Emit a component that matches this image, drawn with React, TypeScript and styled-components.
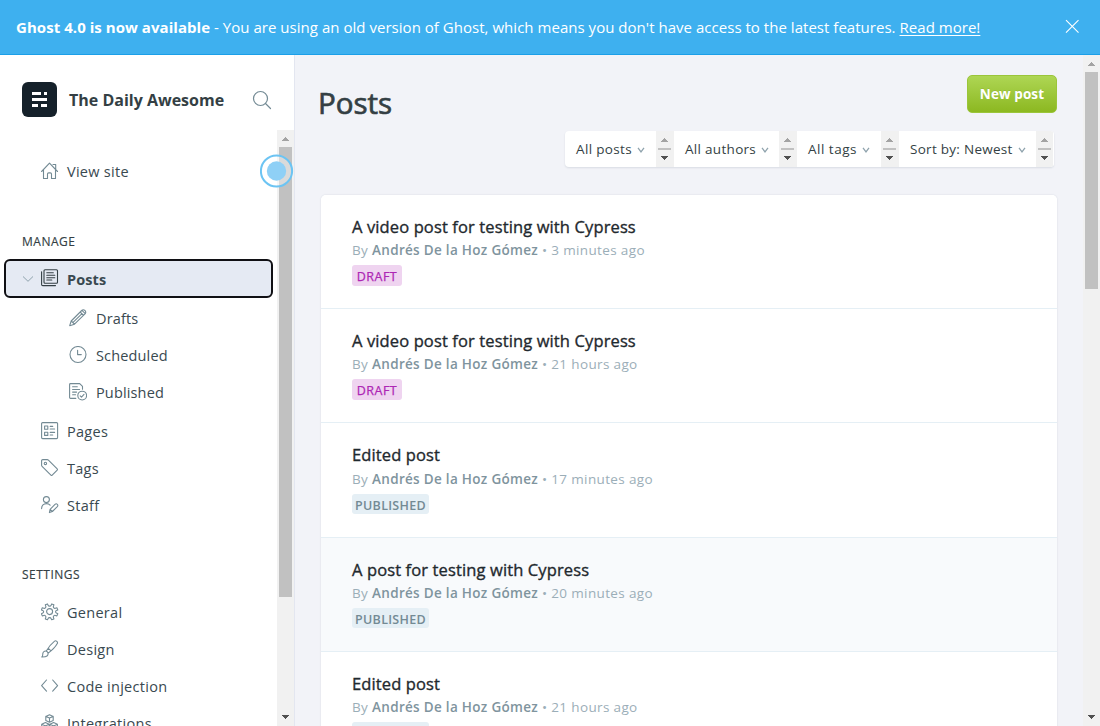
import React from "react";
import styled, { createGlobalStyle, css } from "styled-components";

const GlobalStyle = createGlobalStyle`
  * { box-sizing: border-box; }
  html, body { margin: 0; height: 100%; overflow: hidden; }
  body {
    font-family: "Open Sans", "Noto Sans", sans-serif;
    font-size: 14px;
    color: #343f44;
    background: #f2f3f8;
  }
  svg { display: block; }
`;

const Page = styled.div`
  display: flex;
  flex-direction: column;
  height: 726px;
  overflow: hidden;
`;

const Banner = styled.header`
  display: flex;
  align-items: center;
  justify-content: space-between;
  flex: none;
  height: 55px;
  padding: 0 20px 1px 16px;
  background: #3eb0ef;
  border-bottom: 1px solid #1b9fe8;
  color: #fff;
`;

const BannerText = styled.div`
  font-size: 15px;
  line-height: 20px;
  letter-spacing: 0.03px;
  white-space: nowrap;
`;

const BannerStrong = styled.strong`
  font-weight: 700;
  letter-spacing: 0.05px;
`;

const BannerLink = styled.a`
  color: #fff;
  text-decoration: underline;
  text-underline-offset: 2px;
`;

const Body = styled.div`
  display: flex;
  flex: 1;
  min-height: 0;
`;

const Sidebar = styled.aside`
  position: relative;
  display: flex;
  flex-direction: column;
  flex: none;
  width: 295px;
  background: #fff;
  border-right: 1px solid #e3e6f0;
`;

const SiteHeader = styled.div`
  display: flex;
  align-items: center;
  flex: none;
  height: 75px;
  padding: 14px 22px 0;
`;

const SiteLogo = styled.div`
  width: 35px;
  height: 35px;
  flex: none;
  margin-right: 12px;
`;

const SiteName = styled.div`
  flex: 1;
  font-size: 16px;
  font-weight: 700;
  letter-spacing: 0;
  white-space: nowrap;
`;

const NavScroll = styled.div`
  display: flex;
  flex: 1;
  min-height: 0;
`;

const Nav = styled.nav`
  flex: 1;
  overflow: hidden;
  padding-top: 23px;
`;

const NavHeading = styled.h4<{ $top: number }>`
  margin: ${(p) => p.$top}px 0 0;
  padding: 0 22px;
  height: 18px;
  font-size: 12px;
  line-height: 18px;
  font-weight: 400;
  letter-spacing: 0.5px;
  text-transform: uppercase;
  -webkit-text-stroke: 0.15px currentColor;
`;

const NavItem = styled.a<{ $sub?: boolean; $active?: boolean }>`
  display: flex;
  align-items: center;
  height: 37px;
  padding-left: ${(p) => (p.$sub ? 69 : 41)}px;
  font-size: 14.5px;
  letter-spacing: ${(p) => (p.$sub ? 0.15 : 0.28)}px;
  white-space: nowrap;
  color: #394950;
  ${(p) =>
    p.$active &&
    css`
      height: 39px;
      margin: 8px 4px 2px;
      padding-left: 16px;
      border: 2px solid #101014;
      border-radius: 6px;
      background: #e5eaf3;
      font-weight: 700;
      letter-spacing: 0.1px;
    `}
`;

const NavIcon = styled.span<{ $sub?: boolean; $dark?: boolean }>`
  width: 18px;
  height: 18px;
  flex: none;
  margin-top: -1px;
  margin-right: ${(p) => (p.$sub ? 9 : 8)}px;
  color: ${(p) => (p.$dark ? "#343f44" : "#738a94")};
`;

const ActiveLabel = styled.span`
  padding-top: 2px;
`;

const NavChevron = styled.span`
  width: 12px;
  margin-right: 7px;
  color: #8fa3ad;
`;

const Gap = styled.div<{ $size: number }>`
  height: ${(p) => p.$size}px;
`;

const ScrollTrack = styled.div`
  display: flex;
  flex-direction: column;
  align-items: center;
  flex: none;
  width: 17px;
  background: #f1f1f1;
`;

const ScrollThumb = styled.div<{ $h: number }>`
  width: 13px;
  height: ${(p) => p.$h}px;
  background: #c1c1c1;
`;

const ScrollArrow = styled.div<{ $down?: boolean }>`
  display: flex;
  align-items: center;
  justify-content: center;
  flex: none;
  width: 17px;
  height: 17px;
  margin-top: ${(p) => (p.$down ? "auto" : 0)};
  padding: ${(p) => (p.$down ? "0 0 1px" : "1px 0 0")};
  color: ${(p) => (p.$down ? "#505050" : "#a3a3a3")};
`;

const Beacon = styled.div`
  position: absolute;
  left: 260px;
  top: 99px;
  width: 34px;
  height: 34px;
`;

const Main = styled.main`
  flex: 1;
  min-width: 0;
  padding: 20px 26px 0 26px;
`;

const HeaderRow = styled.div`
  display: flex;
  justify-content: space-between;
  align-items: flex-start;
  height: 56px;
`;

const Title = styled.h1`
  margin: 6px 0 0 -3px;
  font-size: 29.5px;
  line-height: 44px;
  font-weight: 400;
  letter-spacing: 0;
  -webkit-text-stroke: 0.7px currentColor;
`;

const NewPost = styled.button`
  width: 90px;
  height: 38px;
  padding: 0;
  border: 1px solid #9bc53a;
  border-radius: 5px;
  background: linear-gradient(#aed654, #8cb821);
  color: #fff;
  font: 700 13.5px "Open Sans", "Noto Sans", sans-serif;
  letter-spacing: 0.1px;
  text-shadow: 0 -1px 0 rgba(0, 0, 0, 0.08);
`;

const Filters = styled.div`
  display: flex;
  width: 489px;
  height: 36px;
  margin-left: 244px;
  background: #fff;
  border-radius: 4px;
  overflow: hidden;
  box-shadow: 0 1px 2px rgba(30, 50, 80, 0.12);
`;

const Filter = styled.div<{ $w: number; $ls: number }>`
  display: flex;
  align-items: center;
  flex: none;
  width: ${(p) => p.$w}px;
  padding-left: 11px;
  font-size: 13.5px;
  letter-spacing: ${(p) => p.$ls}px;
  white-space: nowrap;
  svg { margin: 2px 0 0 5px; }
`;

const Spinner = styled.div`
  display: flex;
  flex-direction: column;
  align-items: center;
  flex: none;
  width: 18px;
  background: #f1f1f1;
  border-right: 1px solid #f1f1f1;
  &:last-child { border-right-color: #fff; }
`;

const SpinnerBar = styled.div`
  width: 13px;
  height: 2px;
  background: #c1c1c1;
`;

const PostList = styled.section`
  width: 736px;
  height: 600px;
  margin-top: 28px;
  background: #fff;
  border-radius: 5px;
  overflow: hidden;
  box-shadow: 0 0 2px rgba(30, 50, 80, 0.14);
`;

const PostRow = styled.article<{ $tall?: boolean; $hover?: boolean }>`
  height: ${(p) => (p.$tall ? 115 : 114)}px;
  padding: 20px 31px 0;
  border-bottom: 1px solid #e5eff5;
  background: ${(p) => (p.$hover ? "#f8fafc" : "#fff")};
`;

const PostTitle = styled.h3<{ $tall?: boolean }>`
  margin: 0 0 ${(p) => (p.$tall ? 1 : 0)}px;
  font-size: 16.5px;
  line-height: 24px;
  font-weight: 400;
  letter-spacing: 0.12px;
  color: #1f292e;
  -webkit-text-stroke: 0.35px currentColor;
`;

const PostMeta = styled.div`
  font-size: 13.5px;
  line-height: 22px;
  letter-spacing: 0.36px;
  color: #9baeb8;
`;

const Author = styled.span`
  font-weight: 600;
  letter-spacing: 0.3px;
  color: #7f949e;
`;

const Status = styled.span<{ $draft?: boolean }>`
  display: block;
  width: ${(p) => (p.$draft ? 50 : 77)}px;
  height: ${(p) => (p.$draft ? 21 : 20)}px;
  margin-top: 4px;
  border-radius: 3px;
  text-align: center;
  font-size: 12.5px;
  line-height: 23px;
  letter-spacing: ${(p) => (p.$draft ? 0.5 : 0.3)}px;
  font-weight: ${(p) => (p.$draft ? 400 : 600)};
  -webkit-text-stroke: ${(p) => (p.$draft ? 0.25 : 0)}px currentColor;
  color: ${(p) => (p.$draft ? "#ad26b4" : "#738a94")};
  background: ${(p) => (p.$draft ? "#efd4f0" : "#e5eff5")};
`;

const Icon = ({ children, w = 1.1 }: { children: React.ReactNode; w?: number }) => (
  <svg width="18" height="18" viewBox="0 0 18 18" fill="none" stroke="currentColor" strokeWidth={w} strokeLinecap="round" strokeLinejoin="round">
    {children}
  </svg>
);

const icons = {
  home: (
    <Icon>
      <path d="M.6 9.500 8.500 1.200l8 8.300M12 2.500h2.700v4.500M2.500 8.200v8.300h4v-4.400c0-.7.5-1.200 1.200-1.200h1.600c.7 0 1.200.5 1.200 1.200v4.400h4V8.200" />
    </Icon>
  ),
  posts: (
    <Icon>
      <rect x="3" y=".7" width="13.500" height="13.600" rx="1" />
      <path d="M.6 2.800v12.600c0 .7.5 1.200 1.200 1.200h12.700M5.800 3.700h6.500M5.800 6.300h8M5.800 8.700h8M5.800 11h5" />
    </Icon>
  ),
  pencil: (
    <Icon>
      <path d="M.7 16.700 2.200 12 12.700 1.500c1-1 2.200-.9 3.300 0 .9 1.100 1 2.300 0 3.300L5.500 15.200zM2.200 12l3.300 3.200M11.200 3l3.300 3.300M12.900 1.400l3.400 3.300M3.800 13.600 13 4.600" />
    </Icon>
  ),
  clock: (
    <Icon>
      <circle cx="9" cy="8.500" r="8" />
      <path d="M8.600 4.200v4.400h3.700" />
    </Icon>
  ),
  published: (
    <Icon>
      <path d="M6.800 15.400H1.500c-.5 0-.9-.4-.9-.9v-13c0-.5.4-.9.9-.9h9.200l2.800 2.800v2.800M3.600 3.800h4.700M3.600 6.500h7M3.600 9.100h4M3.600 11.800h3" />
      <circle cx="13.200" cy="12.600" r="4.400" />
      <path d="m11.200 12.800 1.300 1.300 2.500-2.700" />
    </Icon>
  ),
  pages: (
    <Icon>
      <rect x=".6" y=".6" width="16" height="16" rx="1" />
      <rect x="3.600" y="4" width="3.200" height="3.200" />
      <rect x="3.600" y="10.200" width="3.200" height="3.200" />
      <path d="M9.200 4.400h2.500M9.200 7h4.400M9.200 10.400h4.400M9.200 13h2.500" />
    </Icon>
  ),
  tag: (
    <Icon>
      <path d="M.6 1.700C.6 1 1.100.6 1.700.6h4.500c.5 0 .9.200 1.200.5l8.800 8.800c.4.4.4.9 0 1.300l-5 5c-.4.4-.9.4-1.300 0L1.100 7.400C.8 7.100.6 6.700.6 6.200z" />
      <circle cx="4.400" cy="4.400" r="1.200" />
    </Icon>
  ),
  staff: (
    <Icon>
      <circle cx="5.400" cy="3.600" r="3" />
      <path d="M.6 12.600c0-3.100 2-5 4.900-5 1.600 0 2.800.6 3.600 1.600M8.400 16.600l.7-3.300 4.900-4.900c.7-.7 1.700-.7 2.300-.1.600.6.600 1.600 0 2.300l-4.900 4.900zM9.100 13.300l2.200 2.200" />
    </Icon>
  ),
  gear: (
    <Icon>
      <circle cx="8.600" cy="8.600" r="3" />
      <path d="m6.500.9.6 1.300c.5 1.200 2.500 1.200 3 0l.6-1.300 2.200.9-.5 1.500c-.4 1.200.8 2.400 2 2l1.500-.5.9 2.100-1.400.7c-1.100.5-1.100 2 0 2.500l1.400.7-.9 2.100-1.500-.5c-1.200-.4-2.400.8-2 2l.5 1.500-2.200.9-.6-1.300c-.5-1.200-2.500-1.200-3 0l-.6 1.300-2.200-.9.500-1.500c.4-1.200-.8-2.400-2-2l-1.500.5-.9-2.100 1.400-.7c1.100-.5 1.100-2 0-2.500L.4 6.900l.9-2.100 1.500.5c1.200.4 2.400-.8 2-2l-.5-1.500z" />
    </Icon>
  ),
  brush: (
    <Icon>
      <path d="M.8 17c1.200-1 .8-2.400 1.100-3.900.4-1.900 2.600-2.800 4.100-1.600 1.500 1.100 1.400 3.400 0 4.500-1.400 1.100-3.400 1-5.200 1zM5.300 11c1.500-2.700 5.500-7.700 8.300-9.900 1.300-.9 3.600.8 2.700 2.500-1.600 2.900-6 7.300-9.100 9.500M7.300 8.400l2.500 2.300" />
    </Icon>
  ),
  code: (
    <Icon>
      <path d="M5.500 3 .6 8.600l4.900 5.600M11.700 3l4.900 5.600-4.900 5.600" />
    </Icon>
  ),
  blocks: (
    <Icon>
      <path d="m8.500.7 3.700 1.700v4L8.500 8.200 4.800 6.400v-4zM4.800 2.400l3.700 1.700 3.700-1.700M8.500 4.100v4.100M4.400 8.500l3.800 1.700v4l-3.800 1.800L.7 14.200v-4zM.7 10.200l3.700 1.700 3.800-1.700M4.400 11.900V16M12.600 8.500l3.800 1.700v4l-3.800 1.800-3.700-1.800v-4zM8.900 10.200l3.700 1.700 3.800-1.700M12.600 11.900V16" />
    </Icon>
  ),
};

type IconName = keyof typeof icons;

const Item = ({ icon, label, sub }: { icon: IconName; label: string; sub?: boolean }) => (
  <NavItem $sub={sub}>
    <NavIcon $sub={sub}>{icons[icon]}</NavIcon>
    {label}
  </NavItem>
);

const UpArrow = () => (
  <svg width="7" height="4" viewBox="0 0 7 4" fill="currentColor" shapeRendering="crispEdges"><path d="M3 0h1v1h1v1h1v1h1v1H0V3h1V2h1V1h1z" /></svg>
);
const DownArrow = () => (
  <svg width="7" height="4" viewBox="0 0 7 4" fill="currentColor" shapeRendering="crispEdges"><path d="M0 0h7v1H6v1H5v1H4v1H3V3H2V2H1V1H0z" /></svg>
);

const SelectBox = ({ label, w, ls }: { label: string; w: number; ls: number }) => (
  <>
    <Filter $w={w} $ls={ls}>
      {label}
      <svg width="8" height="6" viewBox="0 0 8 6" fill="none" stroke="#8fa3ad" strokeWidth="1.300"><path d="m1 .8 3 4 3-4" /></svg>
    </Filter>
    <Spinner>
      <ScrollArrow><UpArrow /></ScrollArrow>
      <SpinnerBar />
      <ScrollArrow $down><DownArrow /></ScrollArrow>
    </Spinner>
  </>
);

const posts = [
  { title: "A video post for testing with Cypress", time: "3 minutes ago", draft: true },
  { title: "A video post for testing with Cypress", time: "21 hours ago", draft: true },
  { title: "Edited post", time: "17 minutes ago", draft: false, tall: true },
  { title: "A post for testing with Cypress", time: "20 minutes ago", draft: false, hover: true },
  { title: "Edited post", time: "21 hours ago", draft: false },
];

export default function App() {
  return (
    <Page>
      <GlobalStyle />
      <Banner>
        <BannerText>
          <BannerStrong>Ghost 4.0 is now available</BannerStrong> - You are using an old version of Ghost, which means you don't have access to the latest features.{" "}
          <BannerLink>Read more!</BannerLink>
        </BannerText>
        <svg width="15" height="15" viewBox="0 0 15 15" stroke="#fff" strokeWidth="1.100"><path d="m1 1.200 12.500 12.500m0-12.500L1 13.700" /></svg>
      </Banner>
      <Body>
        <Sidebar>
          <SiteHeader>
            <SiteLogo>
              <svg width="35" height="35" viewBox="0 0 35 35">
                <rect width="35" height="35" rx="6" fill="#15212a" />
                <path fill="#fff" d="M10 10h9v3h-9zM22 10h3v3h-3zM10 16h15v3H10zM10 22h6v3h-6zM19 22h6v3h-6z" />
              </svg>
            </SiteLogo>
            <SiteName>The Daily Awesome</SiteName>
            <svg width="20" height="20" viewBox="0 0 20 20" fill="none" stroke="#738a94" strokeWidth="1.200" strokeLinecap="round">
              <circle cx="8.500" cy="8.500" r="7" /><path d="m13.500 13.500 5 5" />
            </svg>
          </SiteHeader>
          <NavScroll>
            <Nav>
              <Item icon="home" label="View site" />
              <NavHeading $top={43}>Manage</NavHeading>
              <NavItem $active>
                <NavChevron>
                  <svg width="12" height="8" viewBox="0 0 12 8" fill="none" stroke="currentColor"><path d="m1 1.500 5 4.800 5-4.800" /></svg>
                </NavChevron>
                <NavIcon $dark>{icons.posts}</NavIcon>
                <ActiveLabel>Posts</ActiveLabel>
              </NavItem>
              <Item sub icon="pencil" label="Drafts" />
              <Item sub icon="clock" label="Scheduled" />
              <Item sub icon="published" label="Published" />
              <Gap $size={2} />
              <Item icon="pages" label="Pages" />
              <Item icon="tag" label="Tags" />
              <Item icon="staff" label="Staff" />
              <NavHeading $top={42}>Settings</NavHeading>
              <Gap $size={10} />
              <Item icon="gear" label="General" />
              <Item icon="brush" label="Design" />
              <Item icon="code" label="Code injection" />
              <Item icon="blocks" label="Integrations" />
            </Nav>
            <ScrollTrack>
              <ScrollArrow><UpArrow /></ScrollArrow>
              <ScrollThumb $h={450} />
              <ScrollArrow $down><DownArrow /></ScrollArrow>
            </ScrollTrack>
          </NavScroll>
          <Beacon>
            <svg width="34" height="34" viewBox="0 0 34 34">
              <circle cx="16.500" cy="17" r="15.600" fill="#fff" fillOpacity=".4" stroke="#6cc4f3" strokeWidth="2" />
              <circle cx="16.500" cy="17" r="9.700" fill="#8fd0f6" />
            </svg>
          </Beacon>
        </Sidebar>
        <Main>
          <HeaderRow>
            <Title>Posts</Title>
            <NewPost>New post</NewPost>
          </HeaderRow>
          <Filters>
            <SelectBox label="All posts" w={91} ls={0.35} />
            <SelectBox label="All authors" w={105} ls={0.3} />
            <SelectBox label="All tags" w={84} ls={0.5} />
            <SelectBox label="Sort by: Newest" w={137} ls={0.28} />
          </Filters>
          <PostList>
            {posts.map((p, i) => (
              <PostRow key={i} $tall={p.tall} $hover={p.hover}>
                <PostTitle $tall={p.tall}>{p.title}</PostTitle>
                <PostMeta>By <Author>Andrés De la Hoz Gómez</Author> • {p.time}</PostMeta>
                <Status $draft={p.draft}>{p.draft ? "DRAFT" : "PUBLISHED"}</Status>
              </PostRow>
            ))}
          </PostList>
        </Main>
        <ScrollTrack>
          <ScrollArrow><UpArrow /></ScrollArrow>
          <ScrollThumb $h={217} />
          <ScrollArrow $down><DownArrow /></ScrollArrow>
        </ScrollTrack>
      </Body>
    </Page>
  );
}
